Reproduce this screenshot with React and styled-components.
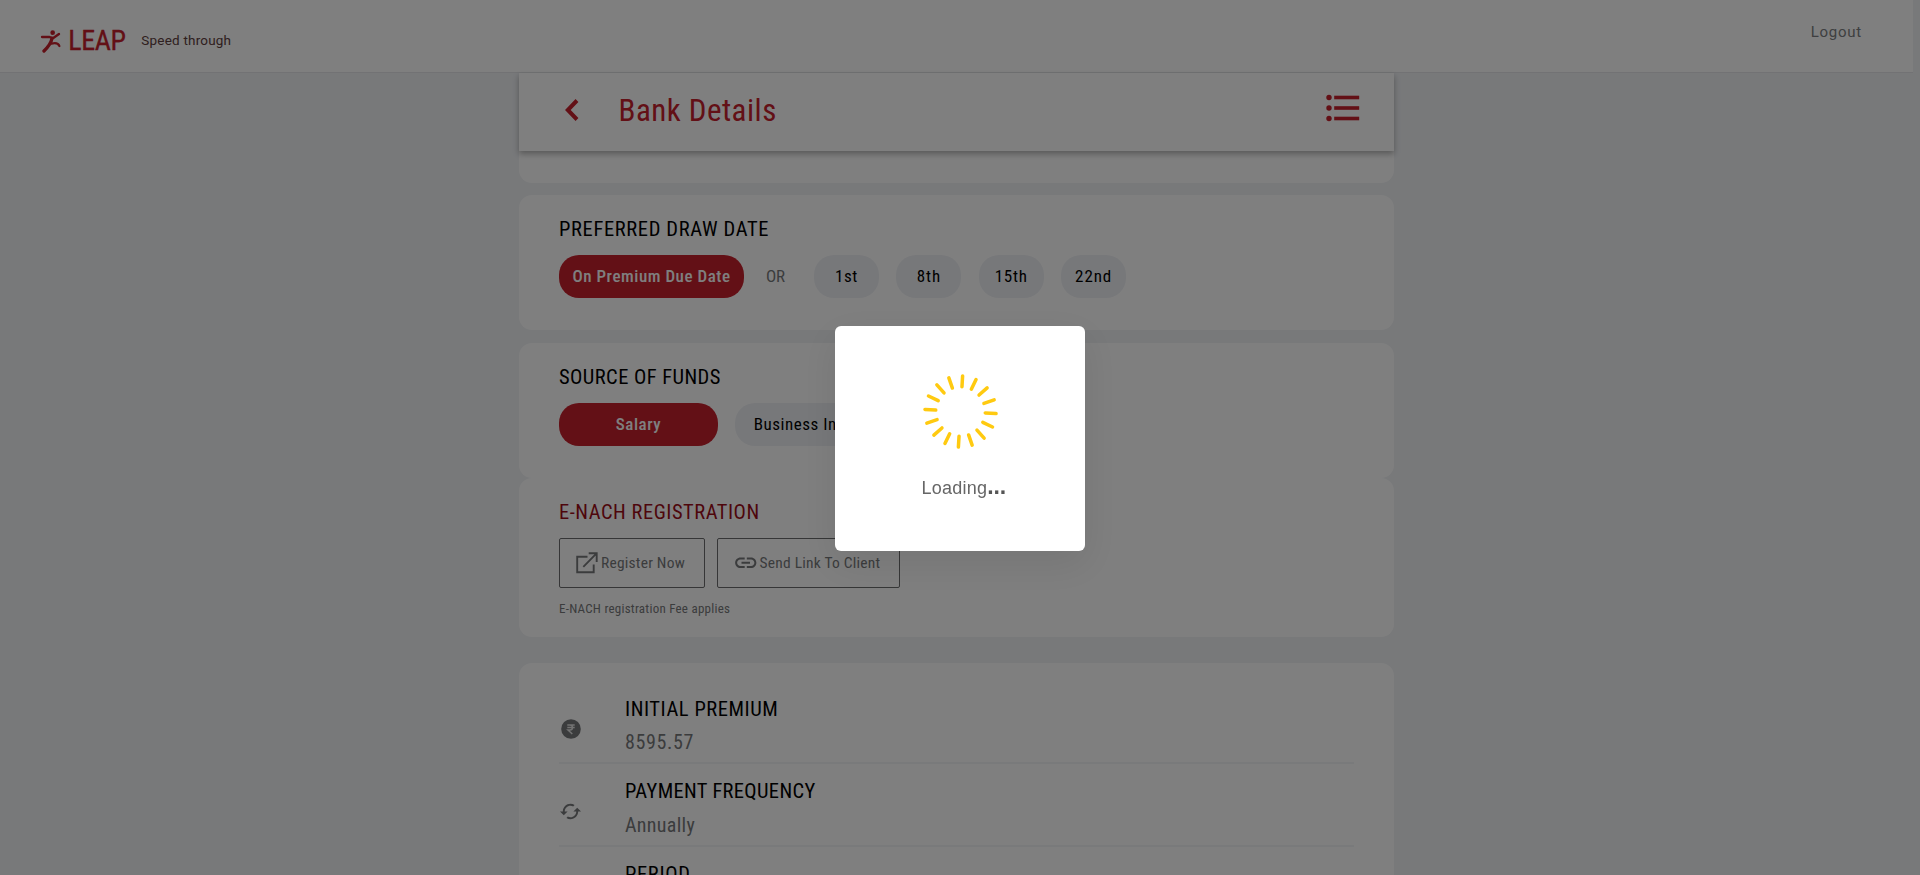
import React from 'react';
import styled, { createGlobalStyle } from 'styled-components';
import { MdCached, MdLink } from 'react-icons/md';

const RED = '#c6202c';
const GREY = '#77797b';

const GlobalStyle = createGlobalStyle`
  *, *::before, *::after { box-sizing: border-box; }
  html, body { margin: 0; height: 875px; overflow: hidden; }
  body {
    background: #f0f2f5;
    color: #000;
    font-family: Roboto, "Liberation Sans", sans-serif;
    font-stretch: 75%;
  }
  svg { display: block; flex: none; }
`;

const Page = styled.div`
  height: 875px;
  overflow: hidden;
`;

const Header = styled.header`
  display: flex;
  align-items: flex-start;
  width: 1913px;
  height: 73px;
  padding: 29px 51px 0 40px;
  background: #fff;
  border-bottom: 1px solid #e4e5e8;
`;

const Brand = styled.div`
  width: 64px;
  margin-left: 7px;
  color: ${RED};
  font-size: 28px;
  font-weight: 400;
  line-height: 24px;
  letter-spacing: -0.4px;
  -webkit-text-stroke: 0.3px ${RED};
`;

const Tagline = styled.div`
  flex: 1;
  margin-left: 9px;
  padding-top: 1px;
  color: #5e4040;
  font: 13.5px/20px Roboto, sans-serif;
  letter-spacing: 0.2px;
`;

const Logout = styled.a`
  margin-top: -7px;
  color: #7d7f82;
  font: 15px/20px Roboto, sans-serif;
  letter-spacing: 0.75px;
`;

const Column = styled.main`
  width: 875px;
  margin-left: 519px;
`;

const TitleBar = styled.div`
  position: relative;
  display: flex;
  align-items: center;
  height: 78px;
  padding: 0 34px 4px 46px;
  background: #fff;
  box-shadow: 0 3px 6px rgba(0, 0, 0, 0.3);
`;

const Title = styled.h1`
  flex: 1;
  margin: 1px 0 0 39.5px;
  color: ${RED};
  font-size: 31px;
  font-weight: 400;
  line-height: 36px;
  letter-spacing: 0.48px;
`;

const MenuButton = styled.div`
  padding-bottom: 5px;
`;

const Card = styled.section`
  height: ${(p) => p.$height}px;
  margin-top: ${(p) => p.$gap || 0}px;
  padding: ${(p) => p.$top || 0}px 40px 0;
  background: #fff;
  border-radius: ${(p) => (p.$tail ? '0 0 13px 13px' : '13px')};
`;

const Heading = styled.h2`
  margin: 0;
  color: ${(p) => (p.$accent ? '#9c0d18' : '#000')};
  font-size: 20.5px;
  font-weight: 400;
  line-height: 24px;
  letter-spacing: ${(p) => p.$spacing}px;
  white-space: nowrap;
`;

const Options = styled.div`
  display: flex;
  align-items: center;
  gap: 17.4px;
  margin-top: 13.3px;
`;

const Pill = styled.button`
  flex: none;
  width: ${(p) => p.$width}px;
  height: 43px;
  padding: 0;
  border: 0;
  border-radius: 20px;
  background: ${(p) => (p.$active ? RED : '#eff1f5')};
  color: ${(p) => (p.$active ? '#fff' : '#000')};
  font-family: inherit;
  font-stretch: 75%;
  font-size: 17px;
  font-weight: ${(p) => (p.$active ? 500 : 450)};
  letter-spacing: ${(p) => p.$spacing || 0.54}px;
  white-space: nowrap;
`;

const Or = styled.span`
  width: 26px;
  margin: 0 4.7px 0 4.5px;
  color: ${GREY};
  font-size: 17px;
  line-height: 20px;
`;

const Actions = styled.div`
  display: flex;
  gap: 12px;
  margin-top: 14px;
`;

const Action = styled.button`
  display: flex;
  align-items: center;
  gap: ${(p) => p.$gap}px;
  width: ${(p) => p.$width}px;
  height: 50px;
  padding: 0 0 0 ${(p) => p.$inset}px;
  border: 1px solid #6c6d6e;
  border-radius: 2px;
  background: #fff;
  color: ${GREY};
  font-family: inherit;
  font-stretch: 75%;
  font-size: 15.5px;
  letter-spacing: 0.22px;
  white-space: nowrap;
`;

const Note = styled.p`
  margin: 13px 0 0;
  color: ${GREY};
  font-size: 13px;
  line-height: 16px;
  letter-spacing: 0.24px;
`;

const Row = styled.div`
  display: flex;
  height: 82.4px;
  padding-top: 15px;
  border-bottom: 2px solid #f3f4f6;
`;

const RowIcon = styled.div`
  display: flex;
  align-items: center;
  width: 66px;
  height: ${(p) => p.$height}px;
  padding-left: ${(p) => p.$inset || 0}px;
  color: ${GREY};
`;

const Value = styled.div`
  margin-top: ${(p) => p.$gap}px;
  color: ${GREY};
  font-size: 20px;
  line-height: 24px;
  letter-spacing: ${(p) => p.$spacing}px;
`;

const Overlay = styled.div`
  position: fixed;
  inset: 0;
  display: flex;
  align-items: center;
  justify-content: center;
  padding-top: 1px;
  background: rgba(0, 0, 0, 0.5);
`;

const Dialog = styled.div`
  display: flex;
  flex-direction: column;
  align-items: center;
  width: 250px;
  height: 225px;
  padding-top: 47px;
  border-radius: 6px;
  background: #fff;
  box-shadow: 0 12px 38px 3px rgba(0, 0, 0, 0.08);
`;

const LoadingText = styled.div`
  display: flex;
  align-items: baseline;
  width: 80px;
  margin: 23px 0 0 3px;
  color: #666;
  font: 18px/24px "Liberation Sans", sans-serif;
  letter-spacing: 0.25px;
`;

const Dots = styled.span`
  color: #555;
  font-size: 23px;
  font-weight: 700;
  letter-spacing: -0.2px;
`;

const Runner = () => (
  <svg width="21.33" height="24" viewBox="120 87 64 72" fill="none" stroke={RED} strokeLinecap="round" strokeLinejoin="round">
    <circle cx="158" cy="98" r="7" fill={RED} stroke="none" />
    <path d="M126 111H149L160 114L177 102" strokeWidth="7" />
    <path d="M156 115Q153 133 132 153" strokeWidth="10" />
    <path d="M154 131Q174 126 178 138" strokeWidth="7" />
  </svg>
);

const Back = () => (
  <svg width="14" height="22" viewBox="0 0 14 22" fill="none" stroke={RED} strokeWidth="4">
    <path d="M12 1.500L2.800 11L12 20.500" />
  </svg>
);

const Menu = () => (
  <svg width="34" height="28" viewBox="0 0 34 28" fill={RED}>
    {[3.5, 14, 24.5].map((y) => (
      <React.Fragment key={y}>
        <circle cx="3" cy={y} r="2.700" />
        <rect x="8.200" y={y - 1.8} width="25" height="3.600" />
      </React.Fragment>
    ))}
  </svg>
);

const External = () => (
  <svg width="22" height="22" viewBox="0 0 22 22" fill="none" stroke="currentColor" strokeWidth="1.900">
    <path d="M11.500 4.700H1.200V20.300H17.700V12.500M7.300 14.900L20.300 1.700M12.700 1.200H20.700V10" />
  </svg>
);

const Rupee = () => (
  <svg width="20" height="20" viewBox="0 0 20 20">
    <circle cx="10" cy="10" r="9.800" fill={GREY} />
    <path d="M6.300 5.900H13.700M6.300 8.500H13.700M7 5.900H9C12.300 5.900 12.300 11 9 11H7L11.300 15" fill="none" stroke="#e4e4e4" strokeWidth="1.500" />
  </svg>
);

const Spinner = () => (
  <svg width="78" height="78" viewBox="-39.5 -38.5 78 78" stroke="#ffca10" strokeWidth="3.500" strokeLinecap="round">
    {Array.from({ length: 16 }, (_, i) => (
      <line key={i} x1="24.800" x2="35.600" y1="0" y2="0" transform={`rotate(${3.4 + i * 22.5})`} />
    ))}
  </svg>
);

export default function App() {
  return (
    <Page>
      <GlobalStyle />
      <Header>
        <Runner />
        <Brand>LEAP</Brand>
        <Tagline>Speed through</Tagline>
        <Logout>Logout</Logout>
      </Header>
      <Column>
        <TitleBar>
          <Back />
          <Title>Bank Details</Title>
          <MenuButton><Menu /></MenuButton>
        </TitleBar>
        <Card $height={32} $tail />
        <Card $height={135} $gap={11.5} $top={22.9}>
          <Heading $spacing={0.65}>PREFERRED DRAW DATE</Heading>
          <Options>
            <Pill $active $width={185}>On Premium Due Date</Pill>
            <Or>OR</Or>
            <Pill $width={65}>1st</Pill>
            <Pill $width={65} $spacing={0.9}>8th</Pill>
            <Pill $width={65} $spacing={0.8}>15th</Pill>
            <Pill $width={65} $spacing={0.9}>22nd</Pill>
          </Options>
        </Card>
        <Card $height={135} $gap={13} $top={22.9}>
          <Heading $spacing={0.44}>SOURCE OF FUNDS</Heading>
          <Options>
            <Pill $active $width={159}>Salary</Pill>
            <Pill $width={159}>Business Income</Pill>
          </Options>
        </Card>
        <Card $height={159} $top={22}>
          <Heading $accent $spacing={0.52}>E-NACH REGISTRATION</Heading>
          <Actions>
            <Action $width={146} $inset={16} $gap={3}>
              <External />
              Register Now
            </Action>
            <Action $width={183} $inset={15} $gap={1}>
              <MdLink size={25.5} />
              Send Link To Client
            </Action>
          </Actions>
          <Note>E-NACH registration Fee applies</Note>
        </Card>
        <Card $height={300} $gap={26.5} $top={19}>
          <Row>
            <RowIcon $height={63} $inset={2}><Rupee /></RowIcon>
            <div>
              <Heading $spacing={0.56}>INITIAL PREMIUM</Heading>
              <Value $gap={9} $spacing={0.65}>8595.57</Value>
            </div>
          </Row>
          <Row>
            <RowIcon $height={64} $inset={0}><MdCached size={23} /></RowIcon>
            <div>
              <Heading $spacing={0.34}>PAYMENT FREQUENCY</Heading>
              <Value $gap={10} $spacing={0.3}>Annually</Value>
            </div>
          </Row>
          <Row>
            <RowIcon $height={63} />
            <div>
              <Heading $spacing={0.65}>PERIOD</Heading>
            </div>
          </Row>
        </Card>
      </Column>
      <Overlay>
        <Dialog>
          <Spinner />
          <LoadingText>Loading<Dots>...</Dots></LoadingText>
        </Dialog>
      </Overlay>
    </Page>
  );
}
